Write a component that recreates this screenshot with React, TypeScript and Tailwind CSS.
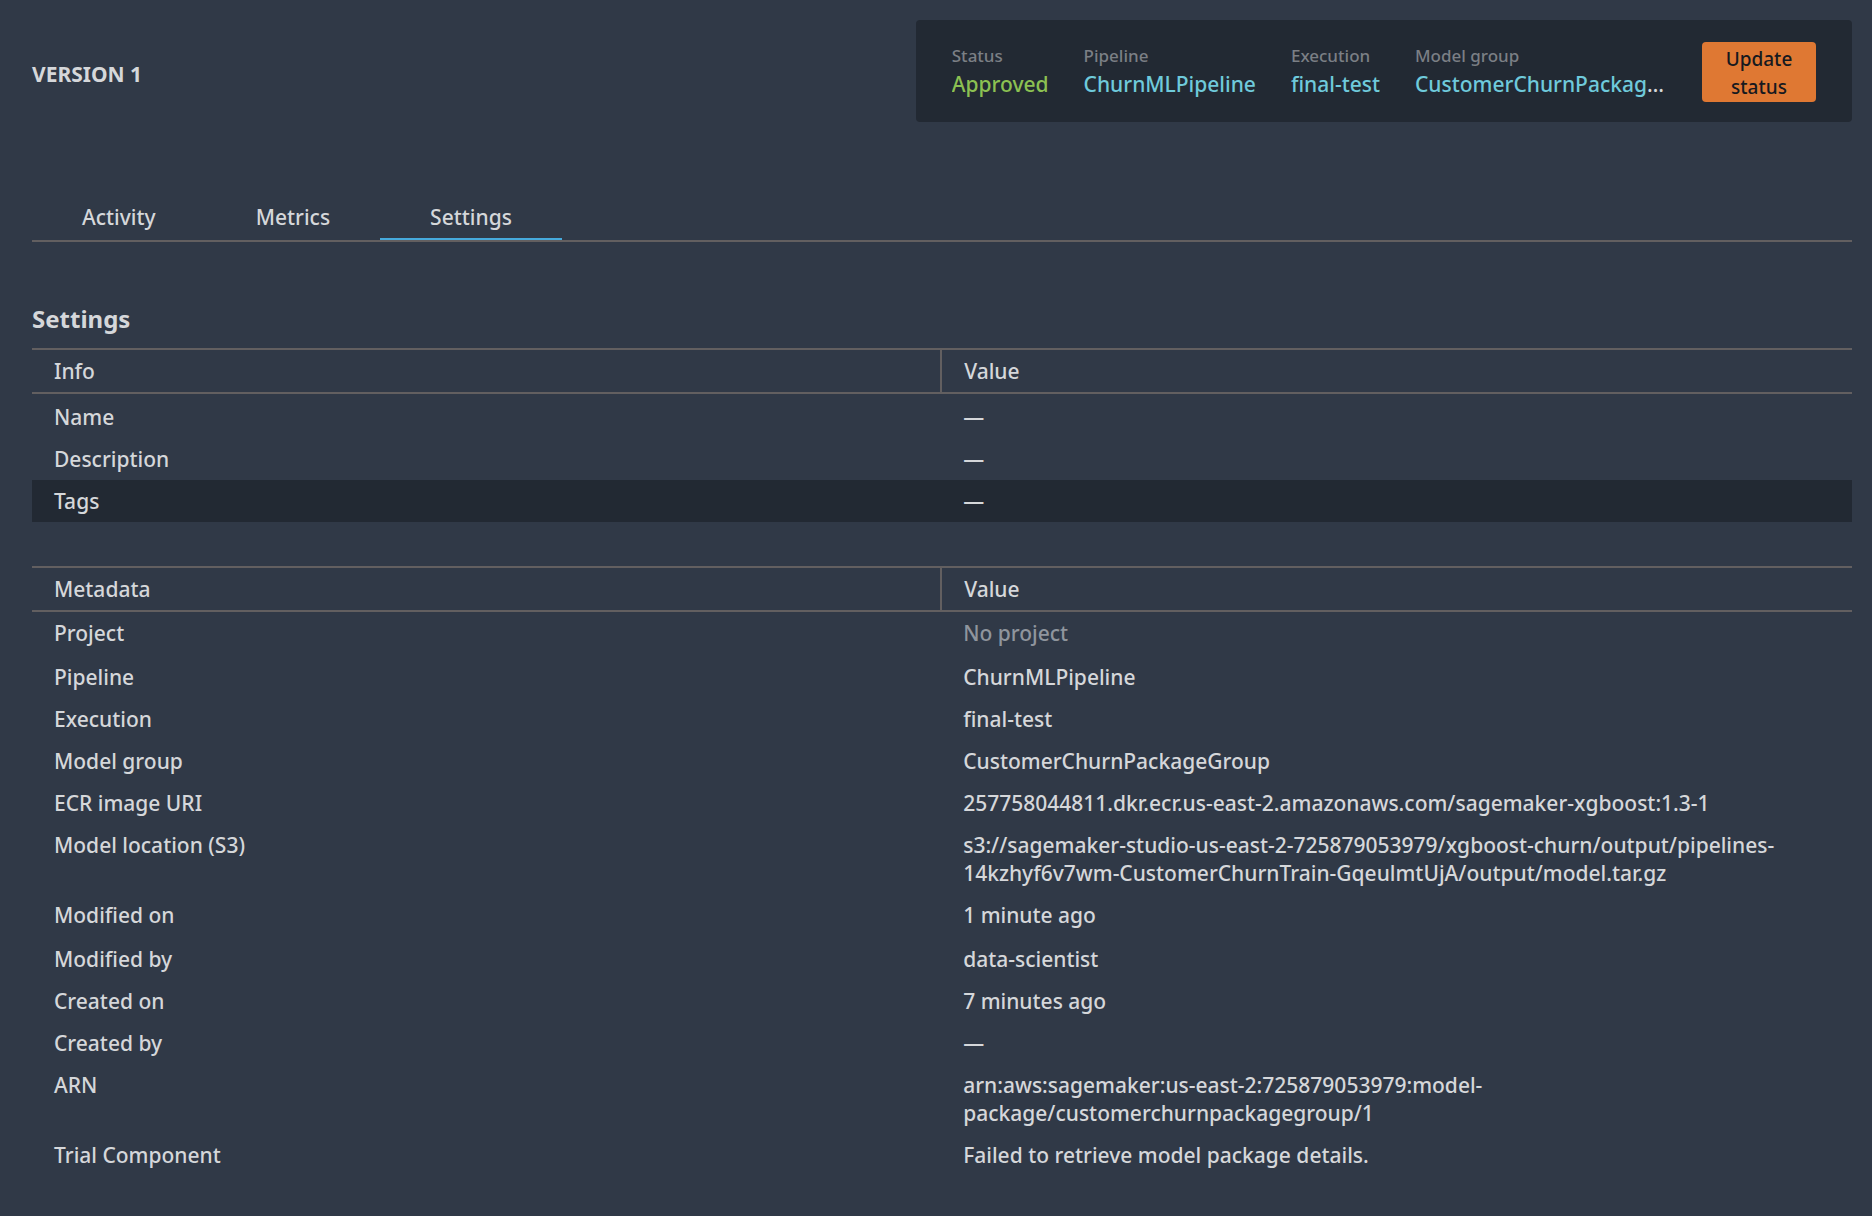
import React from 'react';

type Row = {
  label: string;
  value: string;
  muted?: boolean;
  highlighted?: boolean;
  spacing?: 'lead' | 'trail';
};

const info: Row[] = [
  { label: 'Name', value: '—', spacing: 'lead' },
  { label: 'Description', value: '—' },
  { label: 'Tags', value: '—', highlighted: true },
];

const metadata: Row[] = [
  { label: 'Project', value: 'No project', muted: true, spacing: 'trail' },
  { label: 'Pipeline', value: 'ChurnMLPipeline' },
  { label: 'Execution', value: 'final-test' },
  { label: 'Model group', value: 'CustomerChurnPackageGroup' },
  { label: 'ECR image URI', value: '257758044811.dkr.ecr.us-east-2.amazonaws.com/sagemaker-xgboost:1.3-1' },
  {
    label: 'Model location (S3)',
    value:
      's3://sagemaker-studio-us-east-2-725879053979/xgboost-churn/output/pipelines-14kzhyf6v7wm-CustomerChurnTrain-GqeulmtUjA/output/model.tar.gz',
  },
  { label: 'Modified on', value: '1 minute ago', spacing: 'trail' },
  { label: 'Modified by', value: 'data-scientist' },
  { label: 'Created on', value: '7 minutes ago' },
  { label: 'Created by', value: '—' },
  { label: 'ARN', value: 'arn:aws:sagemaker:us-east-2:725879053979:model-package/customerchurnpackagegroup/1' },
  { label: 'Trial Component', value: 'Failed to retrieve model package details.' },
];

const tabs = ['Activity', 'Metrics', 'Settings'];

function rowPadding(spacing?: 'lead' | 'trail') {
  if (spacing === 'lead') return 'pt-[9px] pb-[7px]';
  if (spacing === 'trail') return 'pt-[7px] pb-[9px]';
  return 'py-[7px]';
}

function DetailsTable({ heading, rows }: { heading: string; rows: Row[] }) {
  return (
    <table className="w-full table-fixed border-separate border-spacing-0 text-left">
      <thead>
        <tr>
          <th scope="col" className="w-[49.9%] border-y-2 border-[#625f60] py-[7px] pl-[22px] font-medium">
            {heading}
          </th>
          <th scope="col" className="border-y-2 border-l-2 border-[#625f60] py-[7px] pl-[22px] font-medium">
            Value
          </th>
        </tr>
      </thead>
      <tbody className="align-top">
        {rows.map((row) => (
          <tr key={row.label} className={row.highlighted ? 'bg-[#222933]' : ''}>
            <th scope="row" className={`pl-[22px] font-medium ${rowPadding(row.spacing)}`}>
              {row.label}
            </th>
            <td className={`pr-5 pl-[23px] ${rowPadding(row.spacing)} ${row.muted ? 'text-[#8f959d]' : ''}`}>
              {row.value}
            </td>
          </tr>
        ))}
      </tbody>
    </table>
  );
}

function Fact({ label, children }: { label: string; children: React.ReactNode }) {
  return (
    <div className="flex min-w-0 flex-col">
      <dt className="text-[17px] text-[#7b7f85]">{label}</dt>
      <dd className="max-w-[251px] truncate">{children}</dd>
    </div>
  );
}

export default function App() {
  return (
    <main className="min-h-screen bg-[#303947] pr-5 pl-8 font-['Noto_Sans',sans-serif] text-[21px] leading-7 font-medium text-[#d5d7da]">
      <header className="flex items-start justify-between pt-5">
        <h1 className="pt-10 font-bold">VERSION 1</h1>
        <div className="flex items-start gap-9 rounded bg-[#222933] px-9 pt-[22px] pb-5">
          <dl className="flex gap-[35px]">
            <Fact label="Status">
              <span className="text-[#8cc152]">Approved</span>
            </Fact>
            <Fact label="Pipeline">
              <a href="#pipeline" className="text-[#6fcadb]">ChurnMLPipeline</a>
            </Fact>
            <Fact label="Execution">
              <a href="#execution" className="text-[#6fcadb]">final-test</a>
            </Fact>
            <Fact label="Model group">
              <a href="#model-group" className="text-[#6fcadb]">CustomerChurnPackageGroup</a>
            </Fact>
          </dl>
          <button type="button" className="w-[114px] rounded bg-[#df7833] px-4 pt-[3px] pb-px text-[19px] text-[#16191f]">
            Update status
          </button>
        </div>
      </header>

      <nav className="mt-20 border-b-2 border-[#625f60]">
        <div role="tablist" className="flex">
          {tabs.map((tab) => (
            <button
              key={tab}
              type="button"
              role="tab"
              aria-selected={tab === 'Settings'}
              className={`border-b-2 px-[50px] pt-px pb-[7px] ${tab === 'Settings' ? 'border-[#46aadc]' : 'border-transparent'}`}
            >
              {tab}
            </button>
          ))}
        </div>
      </nav>

      <section className="pb-8">
        <h2 className="mt-[61px] mb-[13px] text-2xl leading-8 font-bold">Settings</h2>
        <div className="flex flex-col gap-11">
          <DetailsTable heading="Info" rows={info} />
          <DetailsTable heading="Metadata" rows={metadata} />
        </div>
      </section>
    </main>
  );
}
